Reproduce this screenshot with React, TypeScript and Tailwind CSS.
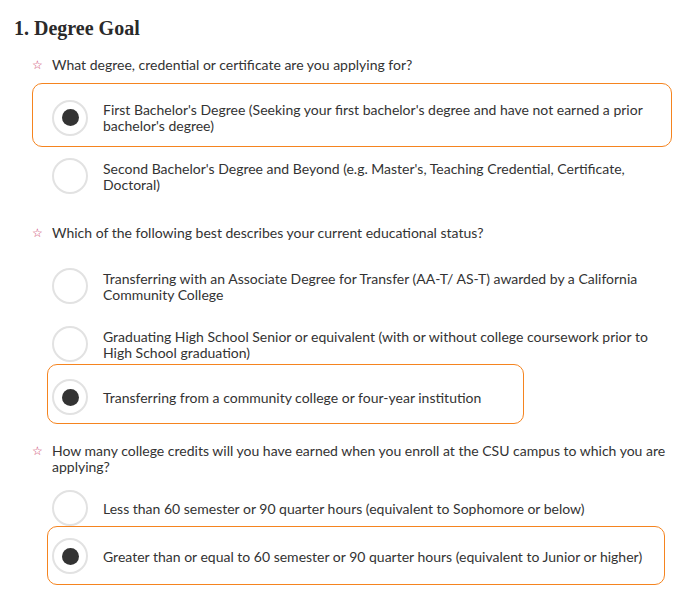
import React from "react";

function Radio({ checked }: { checked?: boolean }) {
  return (
    <span className="flex h-[36px] w-[36px] shrink-0 items-center justify-center rounded-full border-2 border-[#e2e2e2] bg-white">
      {checked && <span className="h-[17px] w-[17px] rounded-full bg-[#333333]" />}
    </span>
  );
}

function Question({ text, className }: { text: string; className: string }) {
  return (
    <div className={`flex pl-[32px] pr-[20px] text-[14px] leading-[16px] text-[#333] ${className}`}>
      <span className="w-[20px] shrink-0 text-[12px] leading-[16px] text-[#c9385f]">☆</span>
      <span>{text}</span>
    </div>
  );
}

function Option({ label, checked, className }: { label: string; checked?: boolean; className: string }) {
  return (
    <div className={`flex items-center gap-[15px] text-[14px] leading-[16px] text-[#333] ${className}`}>
      <Radio checked={checked} />
      <span className="pt-[1px]">{label}</span>
    </div>
  );
}

export default function App() {
  return (
    <div className="flex min-h-[602px] w-[700px] flex-col bg-white font-['Lato',_'Noto_Sans',_sans-serif]">
      <h2 className="pl-[14px] pt-[14px] font-['Liberation_Serif',_serif] text-[20px] font-bold leading-[28px] text-[#2a2a2a]">
        1. Degree Goal
      </h2>

      <Question className="mt-[15px]" text="What degree, credential or certificate are you applying for?" />
      <Option
        checked
        className="ml-[32px] mt-[10px] h-[64px] w-[640px] rounded-[10px] border border-[#f5841f] pl-[19px] pr-[20px] pt-[5px]"
        label="First Bachelor's Degree (Seeking your first bachelor's degree and have not earned a prior bachelor's degree)"
      />
      <Option
        className="ml-[52px] mt-[11px] h-[36px] w-[620px]"
        label="Second Bachelor's Degree and Beyond (e.g. Master's, Teaching Credential, Certificate, Doctoral)"
      />

      <Question className="mt-[31px]" text="Which of the following best describes your current educational status?" />
      <Option
        className="ml-[52px] mt-[27px] h-[36px] w-[620px]"
        label="Transferring with an Associate Degree for Transfer (AA-T/ AS-T) awarded by a California Community College"
      />
      <Option
        className="ml-[52px] mt-[22px] h-[36px] w-[620px]"
        label="Graduating High School Senior or equivalent (with or without college coursework prior to High School graduation)"
      />
      <Option
        checked
        className="ml-[47px] mt-[2px] h-[60px] w-[477px] rounded-[10px] border border-[#f5841f] pl-[4px] pt-[6px]"
        label="Transferring from a community college or four-year institution"
      />

      <Question
        className="mt-[19px]"
        text="How many college credits will you have earned when you enroll at the CSU campus to which you are applying?"
      />
      <Option
        className="ml-[52px] mt-[15px] h-[36px] w-[620px]"
        label="Less than 60 semester or 90 quarter hours (equivalent to Sophomore or below)"
      />
      <Option
        checked
        className="ml-[47px] h-[59px] w-[618px] rounded-[10px] border border-[#f5841f] pl-[4px] pt-[1px]"
        label="Greater than or equal to 60 semester or 90 quarter hours (equivalent to Junior or higher)"
      />
    </div>
  );
}
